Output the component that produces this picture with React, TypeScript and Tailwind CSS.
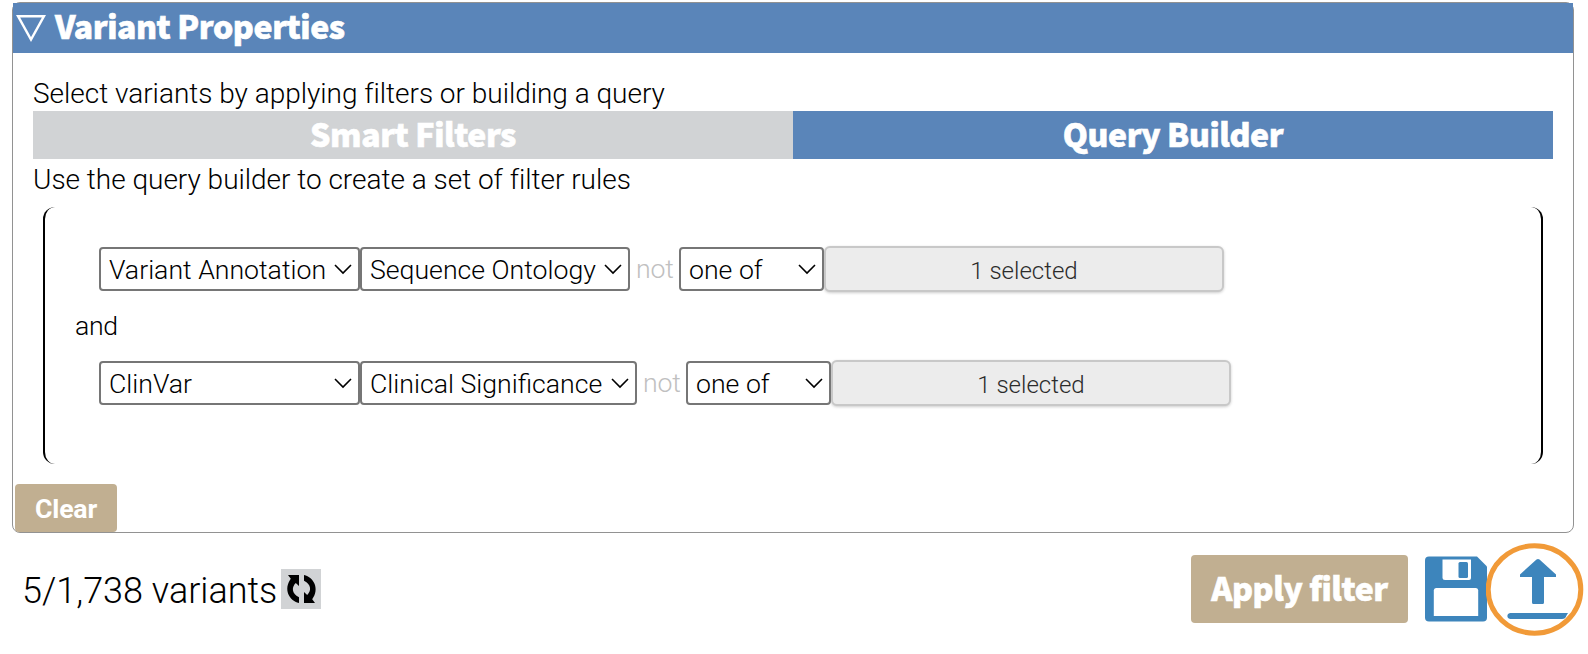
import React from "react";

function Select({ value, className }: { value: string; className: string }) {
  return (
    <div className={"relative h-[44px] shrink-0 " + className}>
      <select
        aria-label={value}
        className="block h-full w-full appearance-none rounded-[4px] border-2 border-[#767676] bg-white pt-[2px] pl-[8px] text-[26.67px] leading-[38px] text-black"
      >
        <option>{value}</option>
      </select>
      <svg className="pointer-events-none absolute right-[8px] top-[17px]" width="18" height="11" viewBox="0 0 18 11" fill="none" stroke="#000" strokeWidth="1.6">
        <path d="M1 1 L9 9 L17 1" />
      </svg>
    </div>
  );
}

function Rule({ source, field, fieldClass }: { source: string; field: string; fieldClass: string }) {
  return (
    <div className="flex h-[46px] items-center">
      <Select value={source} className="w-[261px]" />
      <Select value={field} className={fieldClass} />
      <span className="w-[49px] pl-[6px] text-[26.67px] leading-[32px] tracking-[-0.2px] text-[#c0c0c0]">not</span>
      <Select value="one of" className="w-[145px]" />
      <button className="h-[46px] w-[400px] rounded-[6px] border-2 border-[#c8c8c8] bg-[#ececec] pt-[3px] text-[24px] leading-[30px] text-[#2b2b2b] shadow-[0_1px_3px_rgba(0,0,0,0.2)]">
        1 selected
      </button>
    </div>
  );
}

function RefreshIcon() {
  return (
    <svg width="40" height="40" viewBox="0 0 40 40" fill="#000">
      <path d="M7 6 H18 V17 L14.8 14 C10.500 18 10.500 24.500 18 28.200 V34 C8 31.800 2.200 20 9.800 9.700 Z" />
      <path d="M34 34 H23 V23 L26.200 26 C30.500 22 30.500 15.500 23 11.800 V6 C33 8.200 38.800 20 31.200 30.300 Z" />
    </svg>
  );
}

function SaveIcon() {
  return (
    <svg width="62" height="66" viewBox="0 0 62 66">
      <path d="M4 0.500 H52 L62 10.500 V61.500 Q62 65.500 58 65.500 H4 Q0 65.500 0 61.500 V4.500 Q0 0.500 4 0.500 Z" fill="#3d85bc" />
      <path d="M17.500 3.500 H46 V22 Q46 24 44 24 H20 Q17.500 24 17.500 22 Z" fill="#fff" />
      <rect x="33.500" y="6" width="9.500" height="16" rx="1.500" fill="#3d85bc" />
      <path d="M11 32 H51 Q53.200 32 53.200 34.500 V60 H8.800 V34.500 Q8.800 32 11 32 Z" fill="#fff" />
    </svg>
  );
}

function UploadIcon() {
  return (
    <svg width="98" height="94" viewBox="0 0 98 94">
      <ellipse cx="48.500" cy="47.500" rx="46.300" ry="43.700" fill="none" stroke="#f19a38" strokeWidth="5" />
      <path d="M50.500 17.500 Q52 16.500 53.500 17.500 L70 32.500 V35 H58 V60.500 Q58 62 56.500 62 H47.500 Q46 62 46 60.500 V35 H34 V32.500 Z" fill="#3d85bc" />
      <path d="M24 71 H82 L80.500 73.500 Q79.500 77 76 77 H24 Q21.300 76.500 21.300 74 Q21.300 71.500 24 71 Z" fill="#3d85bc" />
    </svg>
  );
}

export default function App() {
  return (
    <div className="flex h-[654px] w-[1588px] flex-col overflow-hidden bg-white pt-[2px] font-['Roboto',sans-serif] font-light text-black">
      <section className="ml-[12px] flex h-[531px] w-[1562px] shrink-0 flex-col rounded-[8px] border border-[#929292]">
        <header className="flex h-[50px] shrink-0 items-center bg-[#5a85b9] pl-[3px] text-white">
          <svg width="30" height="28" viewBox="0 0 30 28" fill="none" stroke="#fff" strokeWidth="2.400">
            <path d="M2 2.200 H28 L15 25.500 Z" />
          </svg>
          <h1 className="ml-[9px] pb-[6px] font-['Noto_Sans_CJK_SC',sans-serif] text-[32px] leading-[44px] font-black tracking-[-0.43px] [-webkit-text-stroke:0.6px_white]">Variant Properties</h1>
        </header>

        <div className="flex flex-col px-[20px] pt-[24px]">
          <p className="h-[34px] text-[28px] leading-[34px] tracking-[-0.02px]">Select variants by applying filters or building a query</p>
          <div className="grid h-[48px] grid-cols-2 text-center font-['Noto_Sans_CJK_SC',sans-serif] text-[32px] leading-[44px] font-black tracking-[-0.43px] text-white [-webkit-text-stroke:0.6px_white]">
            <div className="bg-[#d1d3d5]">Smart Filters</div>
            <div className="bg-[#5a85b9]">Query Builder</div>
          </div>
          <p className="mt-[4px] h-[34px] text-[28px] leading-[34px] tracking-[-0.02px]">Use the query builder to create a set of filter rules</p>
          <div className="mx-[10px] mt-[10px] flex h-[257px] flex-col rounded-[12px] border-x-2 border-black pt-[39px] pl-[54px]">
            <Rule source="Variant Annotation" field="Sequence Ontology" fieldClass="w-[270px]" />
            <div className="-ml-[24px] h-[68px] pt-[17px] text-[26.67px] leading-[34px] tracking-[-0.3px]">and</div>
            <Rule source="ClinVar" field="Clinical Significance" fieldClass="w-[277px]" />
          </div>
        </div>
        <button className="mt-auto ml-[2px] h-[48px] w-[102px] rounded-[4px] bg-[#c1af91] pt-[2px] text-[26.67px] leading-[46px] font-bold tracking-[-0.2px] text-white">Clear</button>
      </section>

      <footer className="flex h-[112px] items-center">
        <span className="ml-[22px] w-[259px] pt-[3px] text-[36px] leading-[44px] whitespace-nowrap">5/1,738 variants</span>
        <button className="h-[40px] w-[40px] bg-[#d1d3d5]" aria-label="Refresh">
          <RefreshIcon />
        </button>
        <button className="ml-[870px] h-[68px] w-[217px] rounded-[4px] bg-[#c1af91] pb-[4px] font-['Noto_Sans_CJK_SC',sans-serif] text-[32px] leading-[64px] font-black tracking-[-0.43px] text-white [-webkit-text-stroke:0.6px_white]">Apply filter</button>
        <button className="ml-[17px]" aria-label="Save">
          <SaveIcon />
        </button>
        <button className="-ml-[1px]" aria-label="Upload">
          <UploadIcon />
        </button>
      </footer>
    </div>
  );
}
